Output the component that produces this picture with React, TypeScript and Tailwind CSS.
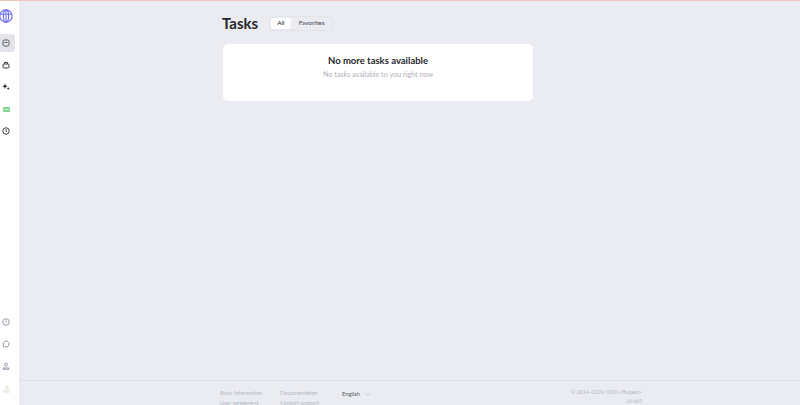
import React from 'react';

const NavIcon: React.FC<{ children: React.ReactNode; active?: boolean }> = ({ children, active }) => (
    <div className={`flex items-center w-[15px] h-[18px] pl-[2px] rounded-r-[3px] ${active ? 'bg-[#e2e4ea]' : ''}`}>
        <svg width="8" height="8" viewBox="0 0 16 16" fill="none" stroke={active ? '#5b5c63' : '#3d3e44'} strokeWidth="2">
            {children}
        </svg>
    </div>
);

const App: React.FC = () => {
    return (
        <div className="flex flex-col w-[800px] h-[405px] overflow-hidden bg-[#ebecf2] text-[#26272b] font-['Lato','Noto_Sans',sans-serif]">
            <div className="h-px bg-[#eec9c0] shrink-0" />
            <div className="flex flex-1 min-h-0">
                <aside className="flex flex-col justify-between w-[19px] shrink-0 bg-white pt-[8px] pb-[12px]">
                    <div className="flex flex-col">
                        <svg width="14" height="14" viewBox="0 0 24 24" fill="none" stroke="#6f6ff5" strokeWidth="2" className="-ml-px">
                            <circle cx="12" cy="12" r="10.5" />
                            <ellipse cx="12" cy="12" rx="4.5" ry="10.5" />
                            <path d="M1.5 9h21M12 1.5v21" />
                        </svg>
                        <div className="flex flex-col gap-[4px] mt-[11px]">
                            <NavIcon active>
                                <rect x="2" y="2" width="12" height="12" rx="3" />
                                <path d="M5 7h6" />
                            </NavIcon>
                            <NavIcon>
                                <rect x="2" y="6" width="12" height="8" rx="2" />
                                <path d="M5 6V3h6v3" />
                            </NavIcon>
                            <NavIcon>
                                <path d="M6 1l1.500 4 4 1.500-4 1.500L6 12 4.500 8l-4-1.500 4-1.500zM12.500 8l.8 2.200 2.200.8-2.200.8-.8 2.200-.8-2.200-2.200-.8 2.200-.8z" fill="#26272b" stroke="none" />
                            </NavIcon>
                            <div className="flex items-center w-[15px] h-[18px] pl-[3px]">
                                <div className="flex items-center justify-center w-[7px] h-[5px] rounded-[1px] bg-[#7fd68f]">
                                    <div className="w-[5px] h-px bg-[#d9f3e0]" />
                                </div>
                            </div>
                            <NavIcon>
                                <circle cx="8" cy="8" r="6.500" />
                                <path d="M8 4v4l2 2" />
                            </NavIcon>
                        </div>
                    </div>
                    <div className="flex flex-col">
                        <div className="flex flex-col gap-[6px]">
                            {[
                                <><circle cx="8" cy="8" r="6.500" /><path d="M8 5v5" /></>,
                                <path d="M8 2a6 6 0 1 1-3.500 10.800L2.500 14l.5-3A6 6 0 0 1 8 2z" />,
                                <><circle cx="8" cy="5" r="3" /><path d="M2 14.500v-2.500h12v2.500z" /></>,
                            ].map((icon, i) => (
                                <div key={i} className="flex items-center w-[15px] h-[16px] pl-[2px]">
                                    <svg width="8" height="8" viewBox="0 0 16 16" fill="none" stroke="#8d90a2" strokeWidth="1.800">
                                        {icon}
                                    </svg>
                                </div>
                            ))}
                        </div>
                        <div className="flex flex-col items-center w-[13px] h-[8px] mt-[11px]">
                            <div className="w-[4px] h-[4px] rounded-full bg-[#eeeee8]" />
                            <div className="w-[7px] h-[4px] rounded-t-[2px] bg-[#f0f0ea]" />
                        </div>
                    </div>
                </aside>
                <div className="flex flex-col flex-1 min-w-0">
                    <main className="flex-1 pl-[203px] pt-[13px]">
                        <div className="flex items-center h-[18px]">
                            <h1 className="text-[15px] leading-[18px] font-bold">Tasks</h1>
                            <div className="flex items-center ml-[11px] h-[15px] p-[1px] rounded-[4px] border border-[#e3e4ea] text-[6.5px]">
                                <span className="flex items-center h-[11px] px-[6px] rounded-[3px] bg-white">All</span>
                                <span className="flex items-center h-[11px] pl-[8px] pr-[7px] text-[#43454d]">Favorites</span>
                            </div>
                        </div>
                        <section className="flex flex-col items-center w-[310px] h-[57px] mt-[12px] ml-[1px] pt-[10px] bg-white rounded-[5px]">
                            <h2 className="text-[9.5px] leading-[13px] font-bold">No more tasks available</h2>
                            <p className="mt-[3px] text-[7.2px] leading-[10px] text-[#b0b3be]">No tasks available to you right now</p>
                        </section>
                    </main>
                    <footer className="flex h-[25px] shrink-0 pl-[201px] pt-[7px] border-t border-[#dfe0e6] text-[5.5px] leading-[10px] text-[#b4b7c2] whitespace-nowrap">
                        <div className="flex flex-col w-[60px]">
                            <span>Basic information</span>
                            <span>User agreement</span>
                        </div>
                        <div className="flex flex-col w-[62px]">
                            <span>Documentation</span>
                            <span>Contact support</span>
                        </div>
                        <div className="flex items-start gap-[5px] w-[230px] mt-px text-[5.8px] text-[#5a5c65]">
                            <span>English</span>
                            <svg width="6" height="6" viewBox="0 0 12 12" fill="none" stroke="#a7aab6" strokeWidth="1.200" className="mt-[2px]">
                                <path d="M1 4l5 5 5-5" />
                            </svg>
                        </div>
                        <div className="flex flex-col items-end w-[70px] leading-[9px] text-[5.3px]">
                            <span>© 2014–2024 ООО «Яндекс»</span>
                            <span>UI v65</span>
                        </div>
                    </footer>
                </div>
            </div>
        </div>
    );
};

export default App;
